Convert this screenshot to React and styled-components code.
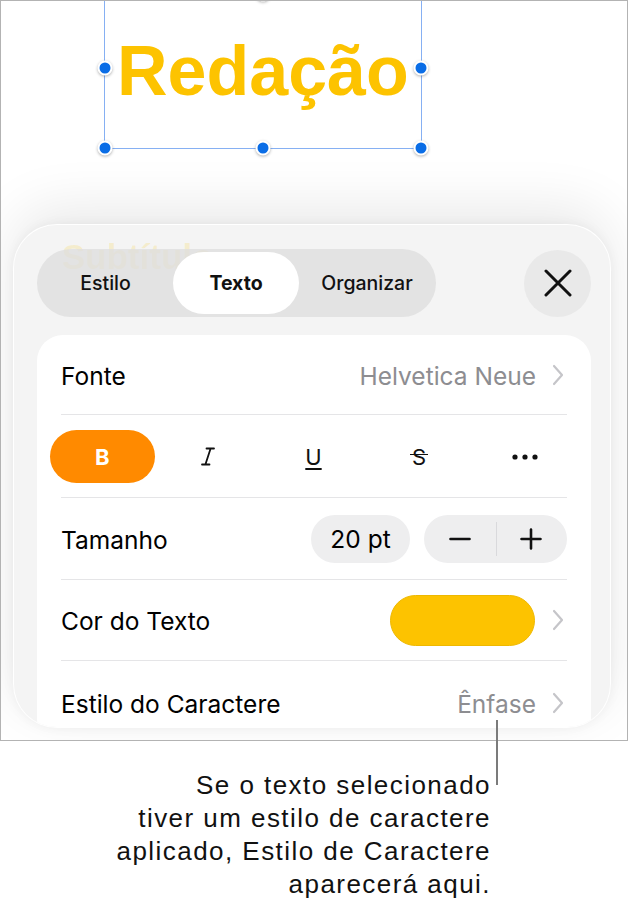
import React from "react"
import styled, { createGlobalStyle } from "styled-components"

const GlobalStyle = createGlobalStyle`
  html, body {
    margin: 0;
    padding: 0;
    background: #fff;
  }
  body {
    font-family: Inter, "Liberation Sans", Arial, sans-serif;
    -webkit-font-smoothing: antialiased;
  }
`

function Chevron() {
  return (
    <ChevronIcon width="12" height="22" viewBox="0 0 12 22" fill="none">
      <path d="M2 2l8 9-8 9" stroke="#c5c5c9" strokeWidth="2.2" strokeLinecap="round" strokeLinejoin="round" />
    </ChevronIcon>
  )
}

function App() {
  return (
    <Page>
      <GlobalStyle />
      <Frame>
        <Canvas>
          <Selection>
            <Handle $x="0%" $y="74px" />
            <Handle $x="100%" $y="74px" />
            <Handle $x="50%" $y="0%" />
            <Handle $x="0%" $y="100%" />
            <Handle $x="50%" $y="100%" />
            <Handle $x="100%" $y="100%" />
          </Selection>
          <Title>Redação</Title>
        </Canvas>

        <Sheet>
          <Ghost aria-hidden="true">Subtítulo</Ghost>
          <Header>
            <Segmented>
              <Segment>Estilo</Segment>
              <Segment $active>Texto</Segment>
              <Segment>Organizar</Segment>
            </Segmented>
            <CloseButton aria-label="Fechar">
              <svg width="28" height="28" viewBox="0 0 28 28">
                <path d="M2 2L26 26M26 2L2 26" stroke="#111" strokeWidth="3" strokeLinecap="round" />
              </svg>
            </CloseButton>
          </Header>

          <Card>
            <Row $h={80}>
              <Label>Fonte</Label>
              <Value>
                <Muted>Helvetica Neue</Muted>
                <Chevron />
              </Value>
            </Row>

            <FormatRow>
              <FormatButton $active>B</FormatButton>
              <FormatButton>
                <svg width="14" height="19" viewBox="0 0 14 19" fill="none">
                  <path d="M5.5 1.5H13M1 17.5H8.5M9.6 1.5L4.4 17.5" stroke="#111" strokeWidth="1.8" strokeLinecap="round" />
                </svg>
              </FormatButton>
              <FormatButton>
                <Under>U</Under>
              </FormatButton>
              <FormatButton>
                <Strike>S</Strike>
              </FormatButton>
              <FormatButton>
                <svg width="26" height="6" viewBox="0 0 26 6">
                  <circle cx="3" cy="3" r="2.6" fill="#111" />
                  <circle cx="13" cy="3" r="2.6" fill="#111" />
                  <circle cx="23" cy="3" r="2.6" fill="#111" />
                </svg>
              </FormatButton>
            </FormatRow>

            <Row $h={82}>
              <Label>Tamanho</Label>
              <Value $gap={14}>
                <SizePill>20 pt</SizePill>
                <Stepper>
                  <StepButton aria-label="Diminuir">
                    <svg width="22" height="22" viewBox="0 0 22 22">
                      <path d="M1.5 11H20.5" stroke="#111" strokeWidth="2.6" strokeLinecap="round" />
                    </svg>
                  </StepButton>
                  <StepButton aria-label="Aumentar">
                    <svg width="22" height="22" viewBox="0 0 22 22">
                      <path d="M1.5 11H20.5M11 1.5V20.5" stroke="#111" strokeWidth="2.6" strokeLinecap="round" />
                    </svg>
                  </StepButton>
                </Stepper>
              </Value>
            </Row>

            <Row $h={81}>
              <Label>Cor do Texto</Label>
              <Value $gap={17}>
                <Swatch />
                <Chevron />
              </Value>
            </Row>

            <Row $h={84} $last>
              <Label>Estilo do Caractere</Label>
              <Value>
                <Muted>Ênfase</Muted>
                <Chevron />
              </Value>
            </Row>
          </Card>
        </Sheet>
      </Frame>

      <Leader />
      <Callout>
        Se o texto selecionado
        <br />
        tiver um estilo de caractere
        <br />
        aplicado, Estilo de Caractere
        <br />
        aparecerá aqui.
      </Callout>
    </Page>
  )
}

const Page = styled.div`
  position: relative;
  width: 628px;
  height: 907px;
  overflow: hidden;
`

const Frame = styled.div`
  box-sizing: border-box;
  width: 628px;
  height: 741px;
  border: 1px solid #b3b3b3;
  background: #fff;
  display: flex;
  flex-direction: column;
  overflow: hidden;
`

const Canvas = styled.div`
  position: relative;
  height: 223px;
  flex: none;
`

const Selection = styled.div`
  position: absolute;
  box-sizing: border-box;
  left: 103px;
  top: -8px;
  width: 318px;
  height: 156px;
  border: 1px solid #86b0f3;
`

const Handle = styled.span`
  position: absolute;
  left: ${(p) => p.$x};
  top: ${(p) => p.$y};
  width: 11px;
  height: 11px;
  border-radius: 50%;
  background: #0a6de6;
  border: 2px solid #fff;
  box-shadow: 0 1px 3px rgba(0, 0, 0, 0.3);
  transform: translate(-50%, -50%);
`

const Title = styled.div`
  position: absolute;
  left: 116px;
  top: 35px;
  font-family: "Liberation Sans", Arial, sans-serif;
  font-weight: 700;
  font-size: 70px;
  line-height: 70px;
  color: #fdc300;
`

const Sheet = styled.div`
  position: relative;
  box-sizing: border-box;
  flex: none;
  margin-left: 12px;
  width: 598px;
  height: 504px;
  padding: 24px 19px 0 23px;
  border: 1.5px solid rgba(255, 255, 255, 0.95);
  border-radius: 44px;
  background: #f4f4f4;
  box-shadow: 0 -16px 56px rgba(0, 0, 0, 0.09), 0 0 12px rgba(0, 0, 0, 0.05);
  overflow: hidden;
`

const Ghost = styled.div`
  position: absolute;
  left: 48px;
  top: 14px;
  font-family: "Liberation Sans", Arial, sans-serif;
  font-weight: 700;
  font-size: 35px;
  line-height: 35px;
  color: rgba(250, 196, 0, 0.16);
  pointer-events: none;
`

const Header = styled.div`
  position: relative;
  display: flex;
  align-items: center;
  justify-content: space-between;
`

const Segmented = styled.div`
  box-sizing: border-box;
  width: 399px;
  height: 68px;
  padding: 3px;
  border-radius: 34px;
  background: rgba(222, 222, 222, 0.78);
  display: grid;
  grid-template-columns: 131px 126px 1fr;
  gap: 2px;
`

const Segment = styled.div`
  display: flex;
  align-items: center;
  justify-content: center;
  border-radius: 31px;
  font-size: 19.5px;
  font-weight: ${(p) => (p.$active ? 700 : 500)};
  color: #111;
  background: ${(p) => (p.$active ? "#fff" : "transparent")};
`

const CloseButton = styled.div`
  width: 67px;
  height: 67px;
  border-radius: 50%;
  background: #e9e9e9;
  display: flex;
  align-items: center;
  justify-content: center;
`

const Card = styled.div`
  margin-top: 18px;
  background: #fff;
  border-radius: 26px;
`

const Row = styled.div`
  height: ${(p) => p.$h}px;
  margin: 0 24px;
  box-sizing: border-box;
  display: flex;
  align-items: center;
  justify-content: space-between;
  border-bottom: ${(p) => (p.$last ? "none" : "1.5px solid #e5e5e7")};
`

const Label = styled.span`
  font-size: 24.5px;
  color: #000;
  padding-top: 2px;
`

const Value = styled.div`
  display: flex;
  align-items: center;
  gap: ${(p) => p.$gap ?? 16}px;
`

const ChevronIcon = styled.svg`
  margin-right: 3px;
`

const Muted = styled.span`
  font-size: 24.5px;
  color: #8d8d91;
  padding-top: 2px;
`

const FormatRow = styled.div`
  height: 83px;
  margin: 0 13px 0 13px;
  display: grid;
  grid-template-columns: repeat(5, 1fr);
  align-items: center;
  position: relative;

  &::after {
    content: "";
    position: absolute;
    left: 11px;
    right: 11px;
    bottom: 0;
    border-bottom: 1.5px solid #e5e5e7;
  }
`

const FormatButton = styled.div`
  height: 53px;
  margin-right: 1px;
  border-radius: 27px;
  display: flex;
  align-items: center;
  justify-content: center;
  background: ${(p) => (p.$active ? "#ff8a00" : "transparent")};
  color: ${(p) => (p.$active ? "#fff" : "#111")};
  font-size: 22px;
  font-weight: 700;
`

const Under = styled.span`
  font-size: 22px;
  font-weight: 400;
  text-decoration: underline;
  text-decoration-thickness: 2px;
  text-underline-offset: 3px;
`

const Strike = styled.span`
  position: relative;
  font-size: 22px;
  font-weight: 400;
  padding: 0 2px;

  &::after {
    content: "";
    position: absolute;
    left: 0;
    right: 0;
    top: 40%;
    border-top: 1.8px solid #111;
  }
`

const SizePill = styled.div`
  width: 99px;
  height: 48px;
  border-radius: 24px;
  background: #eeeeef;
  display: flex;
  align-items: center;
  justify-content: center;
  font-size: 24.5px;
  color: #000;
`

const Stepper = styled.div`
  width: 143px;
  height: 48px;
  border-radius: 24px;
  background: #eeeeef;
  display: grid;
  grid-template-columns: 1fr 1fr;
  position: relative;

  &::after {
    content: "";
    position: absolute;
    left: 50%;
    top: 7px;
    bottom: 7px;
    border-left: 1.5px solid #d9d9dc;
  }
`

const StepButton = styled.div`
  display: flex;
  align-items: center;
  justify-content: center;
`

const Swatch = styled.div`
  box-sizing: border-box;
  width: 145px;
  height: 51px;
  border-radius: 26px;
  background: #fdc300;
  border: 1px solid #eeb800;
`

const Leader = styled.div`
  position: absolute;
  left: 496px;
  top: 720px;
  width: 2px;
  height: 65px;
  background: #7b7b7b;
  z-index: 2;
`

const Callout = styled.div`
  margin-top: 28px;
  padding-right: 137px;
  text-align: right;
  font-family: "Liberation Sans", Arial, sans-serif;
  font-size: 26px;
  line-height: 33px;
  letter-spacing: 1.45px;
  color: #111;
`

export default App
